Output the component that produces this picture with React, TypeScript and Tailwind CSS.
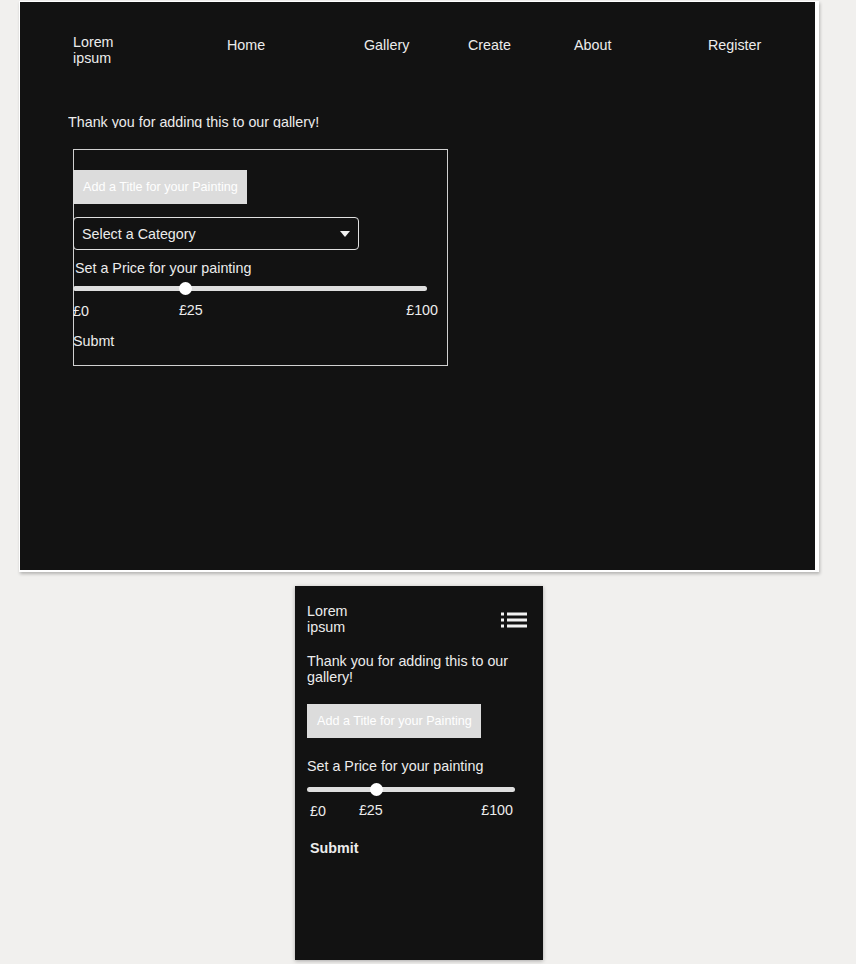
import React from 'react';

const navLinks = [
  { label: 'Home', w: 'w-[137px]' },
  { label: 'Gallery', w: 'w-[104px]' },
  { label: 'Create', w: 'w-[106px]' },
  { label: 'About', w: 'w-[134px]' },
  { label: 'Register', w: 'w-auto' },
];

function ListIcon() {
  return (
    <svg width="26" height="16" viewBox="0 0 26 16" fill="#f2f2f2">
      <rect x="0" y="0.5" width="3" height="3" />
      <rect x="0" y="6.5" width="3" height="3" />
      <rect x="0" y="12.5" width="3" height="3" />
      <rect x="6" y="0.5" width="20" height="3" />
      <rect x="6" y="6.5" width="20" height="3" />
      <rect x="6" y="12.5" width="20" height="3" />
    </svg>
  );
}

function TitleInput() {
  return (
    <div className="w-[174px] h-[34px] bg-[#dcdcdc] flex items-center pl-[10px] text-[12.6px] text-white whitespace-nowrap">
      Add a Title for your Painting
    </div>
  );
}

function Slider({ width, thumb }: { width: number; thumb: number }) {
  return (
    <div className="relative h-[13px]" style={{ width }}>
      <div className="absolute left-0 right-0 top-[4px] h-[5px] rounded-full bg-[#dedede]" />
      <div
        className="absolute top-0 w-[13px] h-[13px] rounded-full bg-white"
        style={{ left: thumb - 6.5 }}
      />
    </div>
  );
}

export default function App() {
  return (
    <div className="min-h-screen bg-[#f1f0ee] font-['Liberation_Sans',Arial,sans-serif] text-[14.3px] leading-[16px] text-[#ececec] pt-px">
      {/* desktop */}
      <div className="ml-[19px] w-[800px] h-[571px] bg-white pl-px pt-px pr-1 pb-[2px] shadow-[1px_2px_3px_rgba(0,0,0,0.25)]">
        <div className="w-full h-full bg-[#121212] pl-[53px] pt-[32px]">
          <nav className="flex items-start">
            <div className="w-[154px]">
              Lorem
              <br />
              ipsum
            </div>
            {navLinks.map((l) => (
              <div key={l.label} className={`${l.w} mt-[3px]`}>
                {l.label}
              </div>
            ))}
          </nav>

          <p className="-ml-[5px] mt-[48px] h-[14px] overflow-hidden">Thank you for adding this to our gallery!</p>

          <div className="mt-[21px] w-[375px] h-[217px] border border-[#d0d0d0] pt-[20px]">
            <div className="-ml-px">
              <TitleInput />
              <div className="mt-[13px] w-[286px] h-[33px] rounded-[4px] border border-[#e0e0e0] flex items-center justify-between pl-[8px] pr-[8px]">
                <span>Select a Category</span>
                <svg width="10" height="6" viewBox="0 0 10 6" fill="#f2f2f2">
                  <path d="M0 0h10L5 6z" />
                </svg>
              </div>
              <p className="mt-[10px] ml-[2px]">Set a Price for your painting</p>
              <div className="mt-[6px]">
                <Slider width={354} thumb={112} />
              </div>
              <div className="mt-[7px] w-[365px] flex">
                <span className="mt-px">£0</span>
                <span className="ml-[90px]">£25</span>
                <span className="ml-auto">£100</span>
              </div>
              <p className="mt-[14px]">Submt</p>
            </div>
          </div>
        </div>
      </div>

      {/* mobile */}
      <div className="ml-[295px] mt-[14px] w-[248px] h-[374px] bg-[#121212] shadow-[0_1px_4px_rgba(0,0,0,0.3)] px-[12px] pt-[17px]">
        <div className="flex items-start justify-between">
          <div>
            Lorem
            <br />
            ipsum
          </div>
          <div className="mt-[9px] mr-[4px]">
            <ListIcon />
          </div>
        </div>
        <p className="mt-[18px] pr-[4px]">Thank you for adding this to our gallery!</p>
        <div className="mt-[19px]">
          <TitleInput />
        </div>
        <p className="mt-[20px]">Set a Price for your painting</p>
        <div className="mt-[9px]">
          <Slider width={208} thumb={69} />
        </div>
        <div className="mt-[6px] w-[206px] flex">
          <span className="ml-[3px] mt-px">£0</span>
          <span className="ml-[33px]">£25</span>
          <span className="ml-auto">£100</span>
        </div>
        <p className="mt-[21px] ml-[3px] font-bold">Submit</p>
      </div>
    </div>
  );
}
